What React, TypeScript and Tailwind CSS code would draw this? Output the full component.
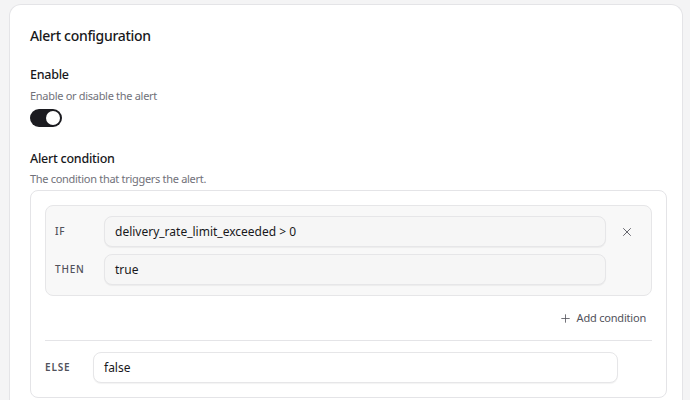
import React, { useState } from 'react';
import { X, Plus } from 'lucide-react';

function Toggle({ on, onChange }: { on: boolean; onChange: (v: boolean) => void }) {
  return (
    <button
      type="button"
      onClick={() => onChange(!on)}
      className={`relative flex h-[18px] w-[32px] items-center rounded-full px-[2px] transition-colors ${
        on ? 'justify-end bg-[#1c1c21]' : 'justify-start bg-[#d4d4d8]'
      }`}
    >
      <span className="block h-[14px] w-[14px] rounded-full bg-white shadow-sm" />
    </button>
  );
}

function ExprInput({ value, muted }: { value: string; muted?: boolean }) {
  return (
    <div
      className={`flex h-[31px] flex-1 items-center rounded-lg border border-[#e6e6e8] px-[10px] text-[12px] text-[#18181b] shadow-[0_1px_1px_rgba(0,0,0,0.05)] ${
        muted ? 'bg-[#f6f6f6]' : 'bg-white'
      }`}
    >
      {value}
    </div>
  );
}

export default function App() {
  const [enabled, setEnabled] = useState(true);

  return (
    <div className="min-h-screen bg-[#f4f4f5] pl-[9px] pr-[7px] pt-[4px] font-['Noto_Sans',sans-serif]">
      <div className="min-h-[420px] rounded-t-xl border border-b-0 border-[#e4e4e7] bg-white pl-[20px] pr-[15px] pt-[21px]">
        <h1 className="text-[14px] font-medium leading-[20px] tracking-[-0.3px] text-[#18181b]">Alert configuration</h1>

        <div className="mt-[19px]">
          <p className="text-[12.5px] font-medium leading-[20px] tracking-[-0.25px] text-[#18181b]">Enable</p>
          <p className="mt-[3px] text-[11px] leading-[16px] tracking-[-0.3px] text-[#71717a]">Enable or disable the alert</p>
          <div className="mt-[5px]">
            <Toggle on={enabled} onChange={setEnabled} />
          </div>
        </div>

        <div className="mt-[22px]">
          <p className="text-[12.5px] font-medium leading-[20px] tracking-[-0.25px] text-[#18181b]">Alert condition</p>
          <p className="mt-[2px] text-[11px] leading-[16px] tracking-[-0.3px] text-[#71717a]">The condition that triggers the alert.</p>

          <div className="mt-[3px] rounded-lg border border-[#e4e4e7] bg-white p-[14px]">
            <div className="flex flex-col gap-[7px] rounded-lg border border-[#e6e6e8] bg-[#f8f8f8] py-[10px] pl-[9px] pr-[12px]">
              <div className="flex items-center">
                <span className="w-[49px] text-[10px] font-medium tracking-[0.08em] text-[#52525b]">IF</span>
                <ExprInput value="delivery_rate_limit_exceeded > 0" muted />
                <button type="button" className="ml-[9px] flex h-[24px] w-[24px] items-center justify-center text-[#52525b]">
                  <X size={14} strokeWidth={1.5} />
                </button>
              </div>
              <div className="flex items-center">
                <span className="w-[49px] text-[10px] font-medium tracking-[0.08em] text-[#52525b]">THEN</span>
                <ExprInput value="true" muted />
                <span className="ml-[9px] w-[24px]" />
              </div>
            </div>

            <div className="my-[8px] flex justify-end">
              <button type="button" className="flex h-[28px] items-center gap-[5px] px-[6px] text-[11px] tracking-[-0.2px] text-[#52525b]">
                <Plus size={13} strokeWidth={1.5} />
                Add condition
              </button>
            </div>

            <div className="border-t border-[#e4e4e7] pt-[11px]">
              <div className="flex items-center pr-[34px]">
                <span className="w-[48px] text-[10px] font-semibold tracking-[0.08em] text-[#52525b]">ELSE</span>
                <ExprInput value="false" />
              </div>
            </div>
          </div>
        </div>
      </div>
    </div>
  );
}
